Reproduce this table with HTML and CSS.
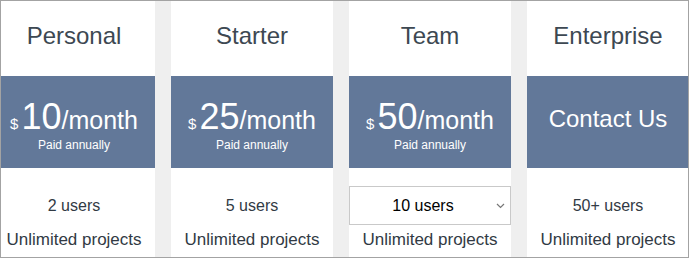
FILE: index.html
```html
<!DOCTYPE html>
<html lang="en">
<head>
<meta charset="utf-8">
<title>Pricing</title>
<link rel="stylesheet" href="styles.css">
</head>
<body>
<div class="frame">
  <div class="plans">
    <div class="plan">
      <div class="plan-name">Personal</div>
      <div class="band">
        <div class="price"><span class="cur">$</span><span class="amt">10</span><span class="per">/month</span></div>
        <div class="note">Paid annually</div>
      </div>
      <div class="feat feat-users">2 users</div>
      <div class="feat feat-proj">Unlimited projects</div>
    </div>
    <div class="plan">
      <div class="plan-name">Starter</div>
      <div class="band">
        <div class="price"><span class="cur">$</span><span class="amt">25</span><span class="per">/month</span></div>
        <div class="note">Paid annually</div>
      </div>
      <div class="feat feat-users">5 users</div>
      <div class="feat feat-proj">Unlimited projects</div>
    </div>
    <div class="plan">
      <div class="plan-name">Team</div>
      <div class="band">
        <div class="price"><span class="cur">$</span><span class="amt">50</span><span class="per">/month</span></div>
        <div class="note">Paid annually</div>
      </div>
      <div class="feat feat-users">
        <div class="select-wrap">
          <select class="users-select">
            <option>10 users</option>
            <option>20 users</option>
            <option>30 users</option>
          </select>
          <svg class="chev" width="9" height="6" viewBox="0 0 9 6"><path d="M1 1l3.5 3.5L8 1" fill="none" stroke="#777" stroke-width="1.2"/></svg>
        </div>
      </div>
      <div class="feat feat-proj">Unlimited projects</div>
    </div>
    <div class="plan">
      <div class="plan-name">Enterprise</div>
      <div class="band band-contact">Contact Us</div>
      <div class="feat feat-users">50+ users</div>
      <div class="feat feat-proj">Unlimited projects</div>
    </div>
  </div>
</div>
</body>
</html>
```

FILE: styles.css
```css
html, body {
  margin: 0;
  padding: 0;
}
body {
  font-family: "Liberation Sans", Arial, sans-serif;
  background: #ffffff;
}
.frame {
  width: 689px;
  height: 258px;
  box-sizing: border-box;
  border: 1px solid #a3a3a3;
  background: #efefef;
  overflow: hidden;
}
.plans {
  display: grid;
  grid-template-columns: repeat(4, 162px);
  column-gap: 16px;
  margin-left: -8px;
  height: 100%;
}
.plan {
  background: #ffffff;
  display: flex;
  flex-direction: column;
  text-align: center;
}
.plan-name {
  height: 75px;
  box-sizing: border-box;
  padding-top: 21px;
  font-size: 24px;
  line-height: 28px;
  color: #3d4852;
}
.band {
  height: 92px;
  box-sizing: border-box;
  background: #627899;
  color: #ffffff;
  padding-top: 21px;
}
.price {
  height: 40px;
  line-height: 40px;
  white-space: nowrap;
}
.cur {
  font-size: 15px;
  margin-right: 3px;
}
.amt {
  font-size: 36px;
}
.per {
  font-size: 25px;
}
.note {
  font-size: 12px;
  line-height: 14px;
  margin-top: 1px;
}
.band-contact {
  padding-top: 0;
  padding-bottom: 6px;
  display: flex;
  align-items: center;
  justify-content: center;
  font-size: 24px;
}
.feat {
  color: #313a44;
}
.feat-users {
  margin-top: 18px;
  height: 39px;
  display: flex;
  align-items: center;
  justify-content: center;
  font-size: 16px;
}
.feat-proj {
  padding-top: 3px;
  font-size: 17px;
  line-height: 24px;
  white-space: nowrap;
}
.select-wrap {
  position: relative;
  width: 100%;
  height: 39px;
}
.users-select {
  appearance: none;
  -webkit-appearance: none;
  width: 100%;
  height: 39px;
  box-sizing: border-box;
  border: 1px solid #c9c9c9;
  border-radius: 0;
  background: #ffffff;
  color: #000000;
  font-family: "Liberation Sans", Arial, sans-serif;
  font-size: 16px;
  text-align: center;
  text-align-last: center;
  padding: 0 14px 0 0;
  margin: 0;
}
.chev {
  position: absolute;
  right: 6px;
  top: 17px;
  pointer-events: none;
}
```
